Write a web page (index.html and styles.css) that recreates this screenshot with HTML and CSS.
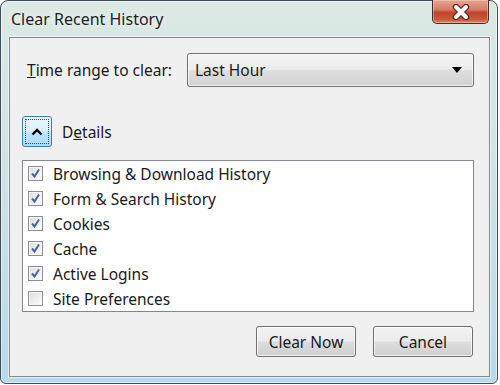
FILE: index.html
```html
<!DOCTYPE html>
<html lang="en">
  <head>
    <meta charset="UTF-8" />
    <meta name="viewport" content="width=device-width, initial-scale=1.0" />
    <title>Clear Recent History</title>
    <link rel="stylesheet" href="styles.css">
  </head>
  <body>
    <div class="window">
      <div class="titlebar">
        <div class="title">Clear Recent History</div>
        <button class="close" aria-label="Close">
          <svg width="24" height="16" viewBox="0 0 24 16">
            <path d="M7 3 L17 13 M17 3 L7 13" stroke="#5a2a22" stroke-width="6.5" stroke-linecap="round" />
            <path d="M7 3 L17 13 M17 3 L7 13" stroke="#f6f3f2" stroke-width="4" stroke-linecap="round" />
          </svg>
        </button>
      </div>

      <div class="client">
        <div class="range-row">
          <label class="range-label"><u>T</u>ime range to clear:</label>
          <div class="select">
            <span>Last Hour</span>
            <svg width="12" height="7" viewBox="0 0 12 7"><path d="M1 0 H11 L6 6 Z" fill="#000" /></svg>
          </div>
        </div>

        <div class="details-row">
          <button class="toggle">
            <span class="focus">
              <svg width="12" height="8" viewBox="0 0 12 8"><path d="M1.5 6.5 L6 2 L10.5 6.5" fill="none" stroke="#000" stroke-width="2.4" /></svg>
            </span>
          </button>
          <span class="details-label">D<u>e</u>tails</span>
        </div>

        <div class="list" id="list"></div>

        <div class="actions">
          <button class="btn">Clear Now</button>
          <button class="btn">Cancel</button>
        </div>
      </div>
    </div>

    <script>
      const items = [
        ["Browsing & Download History", true],
        ["Form & Search History", true],
        ["Cookies", true],
        ["Cache", true],
        ["Active Logins", true],
        ["Site Preferences", false],
      ];

      const elList = document.getElementById("list");

      // one row per history item
      items.forEach(([name, checked]) => {
        const row = document.createElement("div");
        row.className = "item";
        const box = document.createElement("span");
        box.className = "check";
        if (checked) {
          box.innerHTML =
            '<svg width="11" height="11" viewBox="0 0 11 11"><path d="M2 5.5 L4.5 8.5 L9 1.5" fill="none" stroke="#5064a4" stroke-width="2" /></svg>';
        }
        const text = document.createElement("span");
        text.textContent = name;
        row.appendChild(box);
        row.appendChild(text);
        elList.appendChild(row);
      });
    </script>
  </body>
</html>
```

FILE: styles.css
```css
* {
  box-sizing: border-box;
}
body {
  margin: 0;
  background: #ffffff;
  font-family: "Noto Sans", "Open Sans", sans-serif;
  font-size: 15px;
  color: #1a1a1a;
}

.window {
  width: 498px;
  height: 384px;
  border: 1px solid #3d4c58;
  border-radius: 8px 8px 6px 6px;
  background: linear-gradient(180deg, #dce9e5 0%, #d2e3e2 40%, #b8d9ec 100%);
  box-shadow: inset 0 0 0 1px rgba(255, 255, 255, 0.55);
  display: flex;
  flex-direction: column;
}

.titlebar {
  height: 36px;
  display: flex;
  justify-content: space-between;
  align-items: flex-start;
}

.title {
  font-size: 16px;
  padding: 7px 0 0 10px;
  color: #1e1e1e;
  text-shadow: 0 0 6px rgba(255, 255, 255, 0.9);
}

.close {
  width: 57px;
  height: 24px;
  margin: -1px 8px 0 0;
  border: 1px solid #4f2a24;
  border-top: none;
  border-radius: 0 0 5px 5px;
  background: linear-gradient(180deg, #e6a592 0%, #d6806a 40%, #c0432b 55%, #c95a3d 85%, #dd8a68 100%);
  box-shadow: inset 0 0 0 1px rgba(255, 220, 210, 0.45);
  display: flex;
  align-items: center;
  justify-content: center;
  padding: 0;
}

.client {
  flex: 1;
  margin: 0 7px 6px 8px;
  border: 1px solid #7c8b96;
  background: #f0f0f0;
  box-shadow: 0 0 0 1px rgba(255, 255, 255, 0.6);
  display: flex;
  flex-direction: column;
  padding: 15px 15px 0 12px;
}

.range-row {
  display: flex;
  align-items: center;
  height: 34px;
  font-size: 15.5px;
}

.range-label {
  width: 165px;
  padding-left: 5px;
}

.select {
  flex: 1;
  height: 34px;
  border: 1px solid #707070;
  border-radius: 3px;
  background: linear-gradient(180deg, #f3f3f3 0%, #ececec 48%, #dedede 52%, #d2d2d2 100%);
  box-shadow: inset 0 0 0 1px rgba(255, 255, 255, 0.7);
  display: flex;
  align-items: center;
  justify-content: space-between;
  padding: 0 10px 0 7px;
}

.details-row {
  display: flex;
  align-items: center;
  margin-top: 29px;
  gap: 10px;
  font-size: 15.5px;
}

.toggle {
  width: 30px;
  height: 31px;
  border: 1px solid #3c7fb1;
  border-radius: 3px;
  background: linear-gradient(180deg, #eaf6fd 0%, #d9f0fc 48%, #bee6fd 52%, #a7d9f5 100%);
  padding: 2px;
  display: flex;
}

.focus {
  flex: 1;
  border: 1px dotted #2b4e6a;
  display: flex;
  align-items: center;
  justify-content: center;
}

.list {
  margin-top: 13px;
  height: 152px;
  background: #ffffff;
  border: 1px solid #828790;
  font-size: 15.5px;
}

.item {
  display: flex;
  align-items: center;
  height: 25px;
  padding-left: 5px;
  gap: 10px;
}

.check {
  width: 15px;
  height: 15px;
  border: 1px solid #8e8f8f;
  background: linear-gradient(135deg, #dcdcdc 0%, #f4f4f4 70%, #ffffff 100%);
  box-shadow: inset 0 0 0 1px #f8f8f8;
  display: flex;
  align-items: center;
  justify-content: center;
}

.actions {
  display: flex;
  justify-content: flex-end;
  gap: 17px;
  margin-top: 14px;
  padding-right: 1px;
}

.btn {
  width: 100px;
  height: 31px;
  border: 1px solid #707070;
  border-radius: 3px;
  background: linear-gradient(180deg, #f2f2f2 0%, #ebebeb 48%, #dddddd 52%, #cfcfcf 100%);
  box-shadow: inset 0 0 0 1px rgba(255, 255, 255, 0.7);
  font-family: inherit;
  font-size: 15.5px;
  color: #1a1a1a;
}
```
